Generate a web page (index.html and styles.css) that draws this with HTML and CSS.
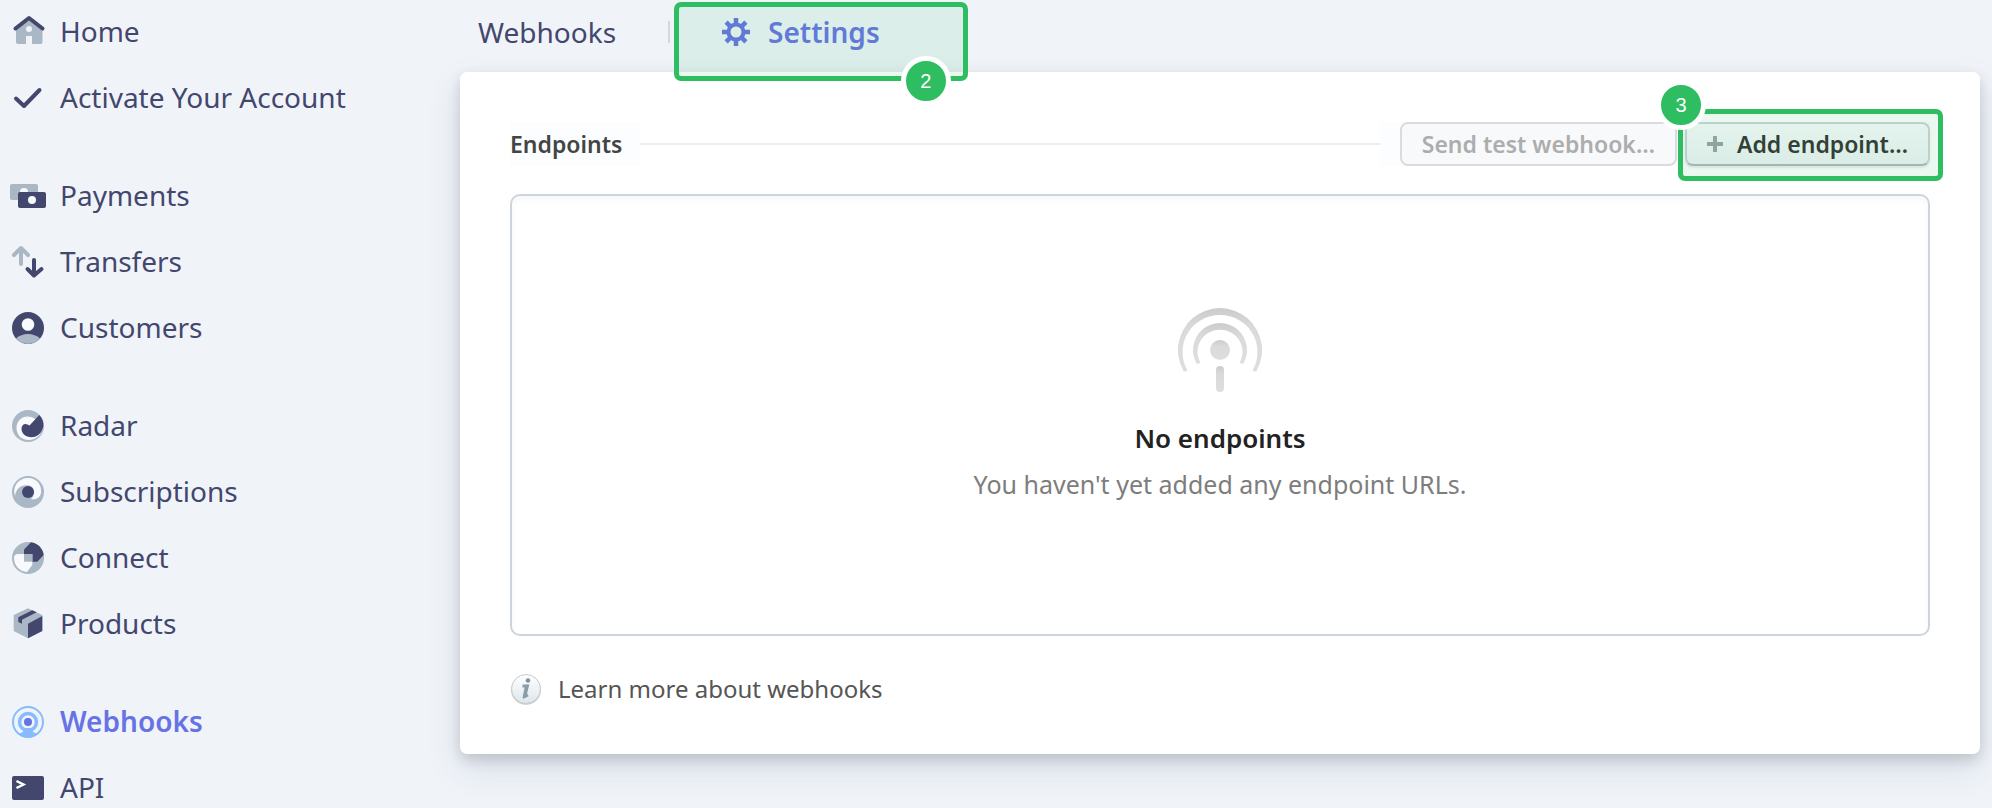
FILE: index.html
```html
<!DOCTYPE html>
<html lang="en">
<head>
<meta charset="utf-8">
<title>Webhooks settings</title>
<link rel="stylesheet" href="styles.css">
</head>
<body>
<div class="app">
  <nav class="sidebar" aria-label="Main">
    <div class="nav-group">
      <a class="nav-item" href="#">
        <svg class="nav-icon" viewBox="0 0 36 36"><path class="soft" fill-rule="evenodd" d="M6 15 19 5l13.500 10v13a2 2 0 0 1-2 2H22v-8h-6v8H8a2 2 0 0 1-2-2zM19 12a3 3 0 1 0 0 6 3 3 0 0 0 0-6z"/><path class="line" d="M5.500 14.500 19 4l13.500 10.500"/></svg>
        Home</a>
      <a class="nav-item" href="#">
        <svg class="nav-icon" viewBox="0 0 36 36"><path class="line" d="M6 18.500l8 7.500L29.500 10"/></svg>
        Activate Your Account</a>
    </div>
    <div class="nav-group">
      <a class="nav-item" href="#">
        <svg class="nav-icon" viewBox="0 0 36 36"><rect class="soft" y="6" width="28" height="16" rx="2"/><circle class="hole" cx="14" cy="14" r="4"/><rect class="dark" x="8" y="14" width="28" height="16" rx="2"/><circle class="hole" cx="22" cy="22" r="4"/></svg>
        Payments</a>
      <a class="nav-item" href="#">
        <svg class="nav-icon" viewBox="0 0 36 36"><path class="line line-soft" d="M11 5v15M4 11l7-7 7 7"/><path class="line" d="M24 16v15M17.500 25l6.500 6.500 7.500-6.500"/></svg>
        Transfers</a>
      <a class="nav-item" href="#">
        <svg class="nav-icon" viewBox="0 0 36 36"><circle class="dark" cx="18" cy="18" r="16"/><path class="soft" d="M6 28.500c3-3 7.500-4.500 12-4.500s9 1.500 12 4.500A16 16 0 0 1 6 28.500z"/><circle class="hole" cx="18" cy="14.500" r="6.300"/></svg>
        Customers</a>
    </div>
    <div class="nav-group">
      <a class="nav-item" href="#">
        <svg class="nav-icon" viewBox="0 0 36 36"><circle class="soft" cx="18" cy="18" r="16"/><path class="hole" d="M25 11C16 5 6.500 11 6.500 20c0 7 5 12 12 12 8 0 13.500-6 14-12z"/><path class="dark" d="M29.300 7c3 3 4.500 7 4 11-1 7-6 11.300-11.800 11.300-6 0-10-4-10-8.300 0-3 1.500-5 4-5 1.500 0 2.500 1 4 1.500z"/></svg>
        Radar</a>
      <a class="nav-item" href="#">
        <svg class="nav-icon" viewBox="0 0 36 36"><circle class="soft" cx="18" cy="18" r="16"/><path class="hole" d="M5 22C2 12 9 4 18 4s14 7 13 15c-1 5-5 7-10 6 5-4 4-12-2-13.500C12 10 6 14 5 22z"/><circle class="dark" cx="18" cy="18" r="6"/></svg>
        Subscriptions</a>
      <a class="nav-item" href="#">
        <svg class="nav-icon" viewBox="0 0 36 36"><circle class="soft" cx="18" cy="18" r="16"/><path class="dark" d="M14 9.500 21 2.300C28 3.500 33 8.500 33.700 15l-6.400 6.700H14z"/><path class="hole" d="M4 18c0-2.500 1.500-4 4-4h14.300v11L17 32C9.500 31.500 4 25.500 4 18z"/><path class="soft" d="M14 14h8.300v7.700H14z"/></svg>
        Connect</a>
      <a class="nav-item" href="#">
        <svg class="nav-icon" viewBox="0 0 36 36"><path class="soft" d="M18 2.300 32.300 9v16L18 32.300 3.700 25V9z"/><path class="dark" d="M18 17.700 32.300 10v15L18 32.300zM8.300 11.300l14-7 4.400 2L12 13.700v4L8.300 16z"/></svg>
        Products</a>
    </div>
    <div class="nav-group">
      <a class="nav-item nav-item-active" href="#" aria-current="page">
        <svg class="nav-icon" viewBox="0 0 36 36"><g fill="none" stroke="#87bbfd"><circle cx="18" cy="18" r="15" stroke-width="2"/><circle cx="18" cy="18" r="8.500" stroke-width="3.500"/></g><path fill="#87bbfd" d="M14 24h8l1 4 5 2a16 16 0 0 1-20 0l5-2z"/><circle cx="18" cy="18" r="5.500" fill="#f0f4f9"/><circle cx="18" cy="18" r="4" fill="#6772e5"/></svg>
        Webhooks</a>
      <a class="nav-item" href="#">
        <svg class="nav-icon" viewBox="0 0 36 36"><rect class="dark" x="2" y="6" width="32" height="24" rx="2"/><path d="M6.500 11l7 3.500-7 3.500" fill="none" stroke="#fff" stroke-width="2.500"/></svg>
        API</a>
    </div>
  </nav>

  <main class="main">
    <nav class="tabs" aria-label="Webhooks">
      <a class="tab" href="#">Webhooks</a>
      <span class="tab-divider"></span>
      <a class="tab tab-active" href="#" aria-current="page">
        <svg class="gear" viewBox="0 0 28 28"><g stroke="#6772e5" stroke-width="4.500"><path d="M14 0v6M14 22v6M0 14h6M22 14h6M4.100 4.100l4.500 4.500M19.400 19.400l4.500 4.500M4.100 23.900l4.500-4.500M19.400 8.600l4.500-4.500"/></g><circle cx="14" cy="14" r="7.500" fill="none" stroke="#6772e5" stroke-width="4"/></svg>
        Settings
        <span class="callout callout-settings"><span class="badge badge-end">2</span></span>
      </a>
    </nav>

    <section class="card">
      <header class="card-head">
        <h2 class="card-title">Endpoints</h2>
        <span class="rule"></span>
        <div class="actions">
          <button class="btn btn-muted" type="button" disabled>Send test webhook…</button>
          <div class="callout-anchor">
            <button class="btn" type="button">
              <svg class="plus" viewBox="0 0 16 16"><path d="M8 0v16M0 8h16" stroke="#9aa3a8" stroke-width="4"/></svg>
              Add endpoint…</button>
            <span class="callout callout-add"><span class="badge badge-start">3</span></span>
          </div>
        </div>
      </header>

      <div class="empty">
        <svg class="empty-icon" viewBox="0 0 84 84">
          <defs><linearGradient id="shade" x1="0" y1="0" x2="0" y2="1"><stop offset="0" stop-color="#cbcbcb"/><stop offset=".3" stop-color="#dadada"/><stop offset="1" stop-color="#dedede"/></linearGradient></defs>
          <g fill="url(#shade)">
            <path d="M6 63.700A42 42 0 1 1 78 63.700L74.500 62.400A37.500 37 0 1 0 9.500 62.400z"/>
            <path d="M19 56.200A27 27 0 1 1 65 56.200L61.500 54.700A22.500 22 0 1 0 22.500 54.700z"/>
            <circle cx="42" cy="42" r="10"/>
            <rect x="38" y="58" width="8" height="26" rx="4"/>
          </g>
        </svg>
        <h3 class="empty-title">No endpoints</h3>
        <p class="empty-text">You haven't yet added any endpoint URLs.</p>
      </div>

      <a class="learn" href="#">
        <svg class="info" viewBox="0 0 32 32">
          <defs><linearGradient id="disc" x1="0" y1="0" x2="0" y2="1"><stop offset="0" stop-color="#fff"/><stop offset="1" stop-color="#dde6eb"/></linearGradient></defs>
          <circle cx="16" cy="17" r="15" fill="#d0d0d0"/>
          <circle cx="16" cy="16" r="14.500" fill="url(#disc)" stroke="#c6cacd"/>
          <circle cx="18" cy="7.500" r="2.300" fill="#8293a0"/>
          <path d="M12.500 13h5l-2.500 10.500 3-1.500" fill="none" stroke="#8b9ca9" stroke-width="2.800"/>
          <path d="M18.500 11.500 15.500 25h-3l2.500-13z" fill="#8b9ca9"/>
        </svg>
        Learn more about webhooks</a>
    </section>
  </main>
</div>
</body>
</html>
```

FILE: styles.css
```css
* {
  box-sizing: border-box;
}

body {
  margin: 0;
  background: #f0f4f9;
  color: #43476e;
  font-family: "Noto Sans", "Open Sans", sans-serif;
  font-size: 28px;
  line-height: 34px;
}

a {
  color: inherit;
  text-decoration: none;
}

h2, h3, p {
  margin: 0;
}

.app {
  display: flex;
  height: 100vh;
  overflow: hidden;
}

.sidebar {
  flex: 0 0 460px;
  display: flex;
  flex-direction: column;
  gap: 62px;
  padding: 14px 10px;
}

.nav-group {
  display: flex;
  flex-direction: column;
  gap: 30px;
}

.nav-item {
  display: flex;
  align-items: flex-start;
  gap: 14px;
}

.nav-item-active {
  color: #6772e5;
  font-weight: 600;
}

.nav-icon {
  flex: none;
  width: 36px;
  height: 36px;
}

.soft { fill: #aab7c5; }
.dark { fill: #43476e; }
.hole { fill: #f8fafd; }

.line {
  fill: none;
  stroke: #43476e;
  stroke-width: 4;
  stroke-linecap: round;
  stroke-linejoin: round;
}

.line-soft { stroke: #aab7c5; }

.main {
  flex: 1;
  min-width: 0;
  padding-right: 12px;
}

.tabs {
  display: flex;
  align-items: center;
  height: 72px;
  padding: 0 18px 8px;
}

.tab-divider {
  width: 2px;
  height: 22px;
  margin: 0 4px 0 52px;
  background: #d3d9e3;
}

.tab-active {
  position: relative;
  display: flex;
  align-items: center;
  gap: 18px;
  padding: 0 88px 0 48px;
  color: #6772e5;
  font-weight: 600;
}

.gear {
  width: 28px;
  height: 28px;
}

.callout {
  position: absolute;
  border: 5px solid #2ebd60;
  border-radius: 7px;
  background: rgba(46, 189, 96, 0.1);
  pointer-events: none;
}

.callout-settings {
  inset: -13px 0 -32px;
}

.callout-add {
  inset: -13px -13px -15px -7px;
}

.badge {
  position: absolute;
  width: 50px;
  height: 50px;
  border: 5px solid #fff;
  border-radius: 50%;
  background: #2ebd60;
  color: #fff;
  font: 20px/40px "Liberation Sans", Arial, sans-serif;
  text-align: center;
}

.badge-end {
  right: 12px;
  bottom: -30px;
}

.badge-start {
  left: -27px;
  top: -34px;
}

.card {
  padding: 50px 50px 48px;
  border-radius: 7px;
  background: #fff;
  box-shadow: 0 14px 34px rgba(50, 60, 93, 0.13), 0 6px 14px rgba(0, 0, 0, 0.14);
}

.card-head {
  display: flex;
  align-items: center;
  height: 44px;
  margin-bottom: 28px;
}

.card-title {
  padding-right: 18px;
  background: #fcfdff;
  color: #444;
  font-size: 23px;
  font-weight: 600;
  line-height: 44px;
}

.rule {
  flex: 1;
  height: 2px;
  background: #e9eef3;
}

.actions {
  display: flex;
  gap: 8px;
  padding-left: 20px;
  background: #fcfdff;
}

.callout-anchor {
  position: relative;
}

.btn {
  display: flex;
  align-items: center;
  gap: 14px;
  height: 44px;
  padding: 0 20px;
  border: 2px solid #ccd3da;
  border-bottom-color: #afb7be;
  border-radius: 8px;
  background: linear-gradient(#f9fbfd, #eef2f6);
  box-shadow: 0 2px 2px rgba(0, 0, 0, 0.08);
  color: #333;
  font-family: inherit;
  font-size: 23px;
  font-weight: 600;
}

.btn-muted {
  border-color: #d9dbde;
  background: #f8f9fb;
  box-shadow: none;
  color: #adadad;
}

.plus {
  width: 16px;
  height: 16px;
}

.empty {
  display: flex;
  flex-direction: column;
  align-items: center;
  min-height: 442px;
  padding: 112px 24px;
  border: 2px solid #cdd4de;
  border-radius: 10px;
  box-shadow: inset 0 4px 6px rgba(0, 0, 0, 0.03);
}

.empty-icon {
  width: 84px;
  height: 84px;
}

.empty-title {
  margin-top: 29px;
  color: #222;
  font-size: 26px;
  font-weight: 600;
}

.empty-text {
  margin-top: 12px;
  color: #7d7d7d;
  font-size: 25px;
}

.learn {
  display: flex;
  align-items: center;
  gap: 16px;
  margin-top: 36px;
  color: #555;
  font-size: 24px;
}

.info {
  width: 32px;
  height: 32px;
}
```
